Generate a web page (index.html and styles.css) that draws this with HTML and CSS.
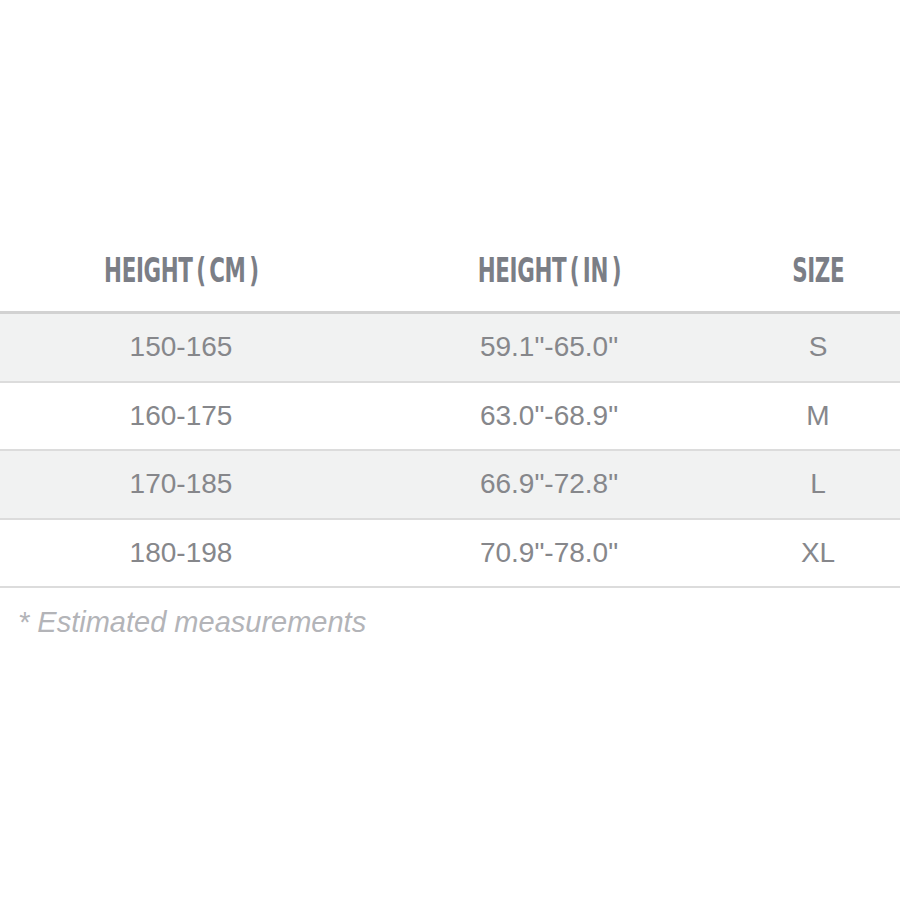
FILE: index.html
```html
<!DOCTYPE html>
<html>
<head>
<meta charset="utf-8">
<link rel="stylesheet" href="styles.css">
</head>
<body>
<div class="page">
  <table class="chart">
    <thead>
      <tr>
        <th class="c1"><span class="hd">HEIGHT ( CM )</span></th>
        <th class="c2"><span class="hd">HEIGHT ( IN )</span></th>
        <th class="c3"><span class="hd">SIZE</span></th>
      </tr>
    </thead>
    <tbody>
      <tr class="alt"><td>150-165</td><td>59.1"-65.0"</td><td>S</td></tr>
      <tr><td>160-175</td><td>63.0"-68.9"</td><td>M</td></tr>
      <tr class="alt"><td>170-185</td><td>66.9"-72.8"</td><td>L</td></tr>
      <tr><td>180-198</td><td>70.9"-78.0"</td><td>XL</td></tr>
    </tbody>
  </table>
  <p class="note">* Estimated measurements</p>
</div>
</body>
</html>
```
FILE: styles.css
```css
html, body {
  margin: 0;
  padding: 0;
  background: #ffffff;
}
.page {
  width: 900px;
  height: 900px;
  padding-top: 228px;
  box-sizing: border-box;
  overflow: hidden;
}
.chart {
  width: 900px;
  border-collapse: collapse;
  table-layout: fixed;
}
.c1 { width: 362px; }
.c2 { width: 374px; }
.c3 { width: 164px; }
.chart th {
  height: 83px;
  padding: 0;
  text-align: center;
  vertical-align: middle;
  border-bottom: 3px solid #d2d2d2;
}
.hd {
  display: inline-block;
  font-family: "Liberation Sans Narrow", "DejaVu Sans Condensed", sans-serif;
  font-weight: bold;
  font-size: 34px;
  line-height: 34px;
  color: #7b7e86;
  transform: scaleX(0.7);
  letter-spacing: -0.5px;
  word-spacing: -5px;
}
.chart td {
  height: 66.5px;
  padding: 0;
  text-align: center;
  vertical-align: middle;
  font-family: "Liberation Sans", Arial, sans-serif;
  font-size: 28px;
  color: #86878b;
  border-bottom: 2px solid #dcdcdc;
}
.chart tr.alt td {
  background: #f1f2f2;
}
.note {
  margin: 18px 0 0 18px;
  font-family: "Liberation Sans", Arial, sans-serif;
  font-style: italic;
  font-size: 29px;
  color: #b3b4b8;
}
```
